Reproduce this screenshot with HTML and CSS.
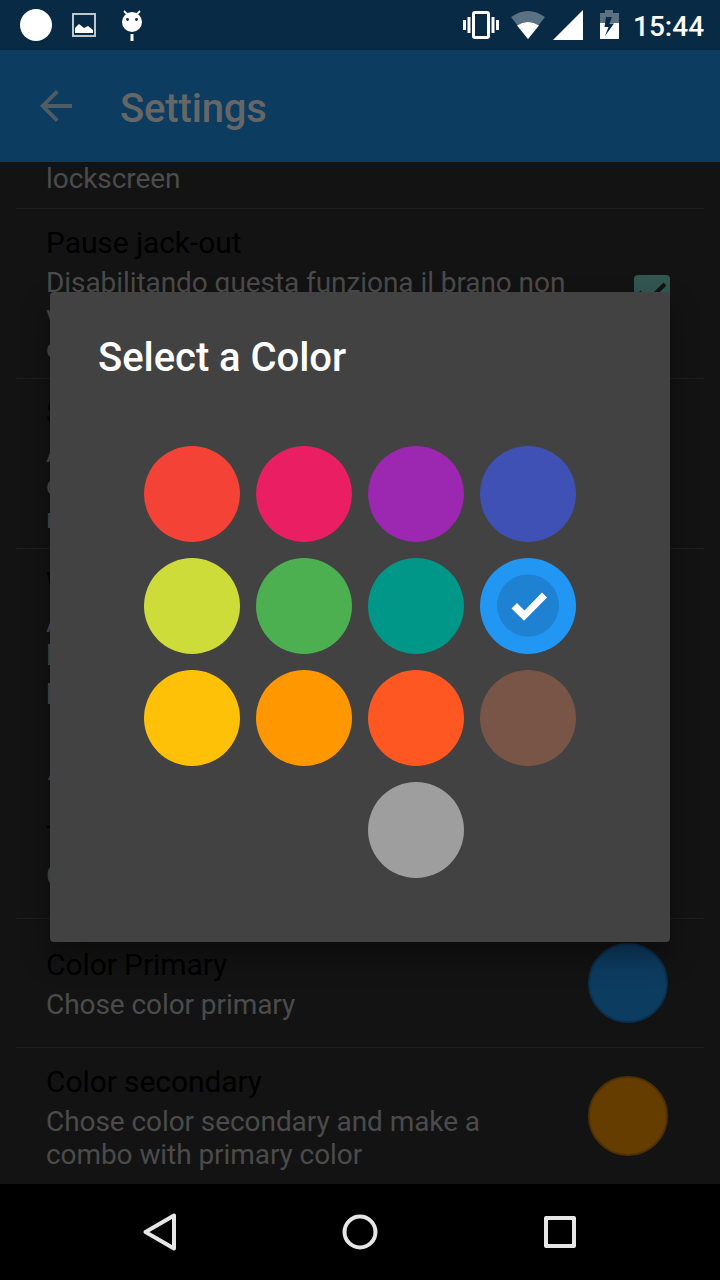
FILE: index.html
```html
<!DOCTYPE html>
<html lang="it">
<head>
<meta charset="utf-8">
<title>Settings</title>
<link rel="stylesheet" href="styles.css">
</head>
<body>
<div class="screen">
  <header class="status">
    <svg class="status-left" width="160" height="50" viewBox="0 0 160 50">
      <circle cx="36" cy="25" r="16" fill="#fff"/>
      <rect x="73" y="14" width="22" height="22" fill="none" stroke="#bcc8d0" stroke-width="2"/>
      <path d="M75 33v-5l4-4 5 4 4-2 5 4v3z" fill="#fff"/>
      <circle cx="132" cy="22" r="10" fill="#fff"/>
      <path d="M124 11l4 4M140 11l-4 4" stroke="#fff" stroke-width="1.8"/>
      <path d="M130.500 34h3v7h-3z" fill="#fff"/>
      <circle cx="127.500" cy="19.500" r="1.400" fill="#082a44"/><circle cx="136.500" cy="19.500" r="1.400" fill="#082a44"/>
    </svg>
    <div class="status-right">
      <svg width="160" height="50" viewBox="460 0 160 50">
        <rect x="473.500" y="12.500" width="15" height="25" rx="1.500" fill="none" stroke="#fff" stroke-width="3"/>
        <path d="M463 20h3v10h-3zM467.500 17h3v16h-3zM491.500 17h3v16h-3zM496 20h3v10h-3z" fill="#fff"/>
        <path d="M511 17Q528 5 545 17L528 39z" fill="#5a7083"/>
        <path d="M517 25.500Q528 18.500 539 25.500L528 39z" fill="#fff"/>
        <path d="M583 10v30h-30z" fill="#fff"/>
        <path d="M600 23V13h5v-3h8v3h6v10z" fill="#5a7083"/>
        <path d="M600 23h19v16h-19z" fill="#fff"/>
        <path d="M612 17h-6l-1.500 10h4l-3.500 9 9-12.500h-4.500z" fill="#082a44"/>
      </svg>
      <span class="clock">15:44</span>
    </div>
  </header>
  <div class="toolbar">
    <svg width="32" height="32" viewBox="0 0 32 32" fill="none" stroke="#505c64" stroke-width="3.800"><path d="M32 16H3M17.300 1.400L2.700 16l14.600 14.600"/></svg>
    <h1 class="toolbar-title">Settings</h1>
  </div>
  <main class="list">
    <section class="row row-cut"><p class="summary">lockscreen</p></section>
    <section class="row row-tall">
      <div class="text"><h2 class="name">Pause jack-out</h2><p class="summary">Disabilitando questa funziona il brano non<br>v<br>c</p></div>
      <svg class="check" width="36" height="36" viewBox="0 0 36 36"><rect width="36" height="36" rx="4" fill="#335650"/><path d="M5 17l9 9L31 9" fill="none" stroke="#131313" stroke-width="4"/></svg>
    </section>
    <section class="row row-tall"><div class="text"><h2 class="name">S</h2><p class="summary">A<br>c<br>n</p></div></section>
    <section class="row row-plain"><div class="text"><h2 class="name">W</h2><p class="summary">A<br>l<br>p</p></div></section>
    <section class="row row-section"><div class="text"><h3 class="category">A</h3><h2 class="name">T</h2><p class="summary">C</p></div></section>
    <section class="row row-color">
      <div class="text"><h2 class="name">Color Primary</h2><p class="summary">Chose color primary</p></div>
      <i class="swatch swatch-blue"></i>
    </section>
    <section class="row row-last">
      <div class="text"><h2 class="name">Color secondary</h2><p class="summary">Chose color secondary and make a<br>combo with primary color</p></div>
      <i class="swatch swatch-amber"></i>
    </section>
  </main>
  <nav class="nav">
    <svg width="720" height="96" viewBox="0 0 720 96" fill="none" stroke="#e6e6e6" stroke-width="4" stroke-linejoin="round">
      <path d="M174 31.500v33L145.500 48z"/>
      <circle cx="360" cy="48" r="15.500"/>
      <rect x="546" y="34" width="28" height="28"/>
    </svg>
  </nav>
  <div class="dialog">
    <h2 class="dialog-title">Select a Color</h2>
    <div class="palette">
      <i class="dot red"></i><i class="dot pink"></i><i class="dot purple"></i><i class="dot indigo"></i>
      <i class="dot lime"></i><i class="dot green"></i><i class="dot teal"></i>
      <i class="dot blue"><svg width="96" height="96" viewBox="0 0 96 96"><circle cx="48" cy="47.500" r="31" fill="#1e81d1"/><path d="M31.500 50.500l5.500-5.500 7.500 7.500L62 34.500l5 5L44 62.700z" fill="#fff"/></svg></i>
      <i class="dot amber"></i><i class="dot orange"></i><i class="dot deep"></i><i class="dot brown"></i>
      <i class="dot grey"></i>
    </div>
  </div>
</div>
</body>
</html>
```
FILE: styles.css
```css
* { box-sizing: border-box; }
body { margin: 0; background: #131313; font-family: Roboto, "Noto Sans", sans-serif; }
h1, h2, h3, p { margin: 0; }
svg { display: block; flex: none; }
.screen { position: relative; width: 720px; height: 1280px; overflow: hidden; display: flex; flex-direction: column; }
.status { height: 50px; flex: none; display: flex; justify-content: space-between; background: #082a44; }
.status-right { display: flex; width: 260px; }
.clock { margin-left: 13px; color: #fff; font-size: 28px; font-weight: 500; line-height: 54px; }
.toolbar { height: 112px; flex: none; display: flex; align-items: center; gap: 48px; padding: 0 40px; background: #0d3c61; }
.toolbar-title { padding-top: 6px; color: #666; font-size: 40px; font-weight: 500; line-height: 48px; letter-spacing: -.15px; }
.list { height: 1022px; flex: none; overflow: hidden; padding: 0 16px; }
.row { display: flex; justify-content: space-between; padding: 16px 36px 0 30px; border-bottom: 1px solid #1e1e1e; }
.row-cut { height: 47px; padding-top: 0; }
.row-tall { height: 170px; }
.row-plain { height: 170px; border-bottom: 0; }
.row-section { height: 200px; padding-top: 35px; }
.row-color { height: 129px; padding-top: 0; align-items: center; }
.row-color .text { padding-top: 2px; }
.row-last { height: 137px; border-bottom: 0; }
.name { color: #000; font-size: 30px; font-weight: 400; line-height: 35px; letter-spacing: -.09px; white-space: nowrap; }
.summary { margin-top: 6px; color: #4b4b4b; font-size: 28px; line-height: 33px; letter-spacing: -.07px; white-space: nowrap; }
.row-cut .summary { margin-top: 0; }
.category { margin-bottom: 33px; padding-left: 2px; color: #335650; font-size: 28px; font-weight: 500; line-height: 33px; }
.row-section .name { line-height: 34px; }
.row-section .summary { margin-top: 5px; }
.check { margin: 50px -2px 0 0; }
.swatch { width: 80px; height: 80px; flex: none; border-radius: 50%; }
.swatch-blue { background: #0d3c61; border: 2px solid #0b304d; }
.swatch-amber { margin-top: 12px; background: #663d00; border: 2px solid #523100; }
.nav { height: 96px; flex: none; background: #000; }
.dialog { position: absolute; left: 50px; top: 292px; width: 620px; height: 650px; padding: 42px 48px 0; border-radius: 4px; background: #424242; box-shadow: 0 14px 28px rgba(0, 0, 0, .38); }
.dialog-title { color: #fff; font-size: 40px; font-weight: 500; line-height: 47px; letter-spacing: -.05px; }
.palette { display: grid; grid-template-columns: repeat(4, 96px); gap: 16px; padding: 65px 0 0 46px; }
.dot { height: 96px; border-radius: 50%; }
.red { background: #f44336; }
.pink { background: #e91e63; }
.purple { background: #9c27b0; }
.indigo { background: #3f51b5; }
.lime { background: #cddc39; }
.green { background: #4caf50; }
.teal { background: #009688; }
.blue { background: #2196f3; }
.amber { background: #ffc107; }
.orange { background: #ff9800; }
.deep { background: #ff5722; }
.brown { background: #795548; }
.grey { grid-column: 3; background: #9e9e9e; }
```
